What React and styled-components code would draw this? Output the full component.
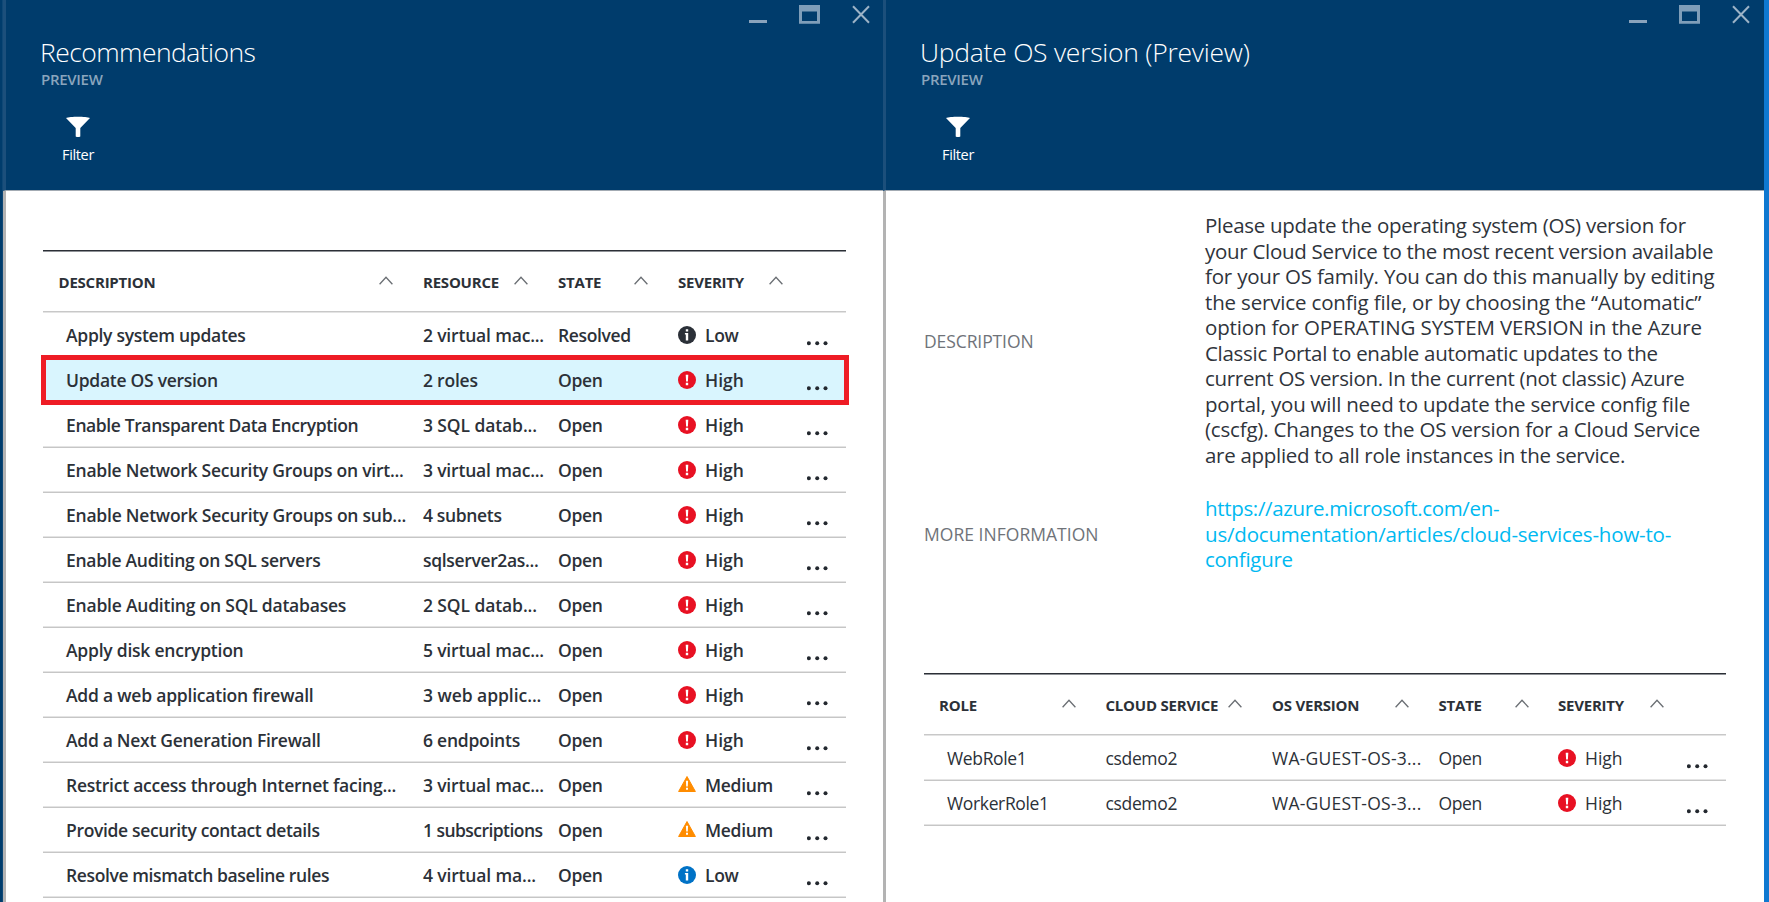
import React from 'react';
import styled, { createGlobalStyle, css } from 'styled-components';

const GlobalStyle = createGlobalStyle`
  * { box-sizing: border-box; }
  body {
    margin: 0;
    background: #fff;
    color: #2c3138;
    font-family: 'Open Sans', 'Noto Sans', sans-serif;
    overflow: hidden;
  }
`;

const Desktop = styled.div`
  display: flex;
  width: 1769px;
  height: 902px;
  overflow: hidden;
`;

const LeftStrip = styled.div`
  flex: 0 0 3px;
  background: linear-gradient(to right, #003c6c 0 2px, #0f4876 2px 3px);
`;

const RightStrip = styled.div`
  flex: 0 0 5px;
  background: #0f78d0;
`;

const Blade = styled.section`
  flex: 0 0 ${(p) => p.$width}px;
  display: flex;
  flex-direction: column;
`;

const BladeHeader = styled.header`
  position: relative;
  flex: 0 0 191px;
  padding: 33px 0 0 34px;
  background: #003c6c;
  color: #fff;
  border-left: 3px solid #1c4f7b;
  border-bottom: 1px solid #a3abb3;
`;

const BladeBody = styled.div`
  flex: 1;
  min-height: 0;
  background: #fff;
  border-left: 3px solid #b3b3b3;
  padding-left: ${(p) => p.$inset}px;
`;

const Controls = styled.div`
  position: absolute;
  top: 5px;
  right: ${(p) => p.$right}px;
  display: flex;
  gap: 32px;
  svg { display: block; }
`;

const Title = styled.h1`
  margin: 0;
  font-size: 26.5px;
  line-height: 38px;
  font-weight: 300;
  white-space: nowrap;
  letter-spacing: ${(p) => p.$tracking}px;
`;

const Subtitle = styled.div`
  margin-top: -2px;
  padding-left: 1px;
  font-size: 15px;
  line-height: 20px;
  font-weight: 600;
  letter-spacing: -0.3px;
  color: #8aa5bd;
`;

const FilterButton = styled.div`
  width: 76px;
  margin-top: 27px;
  display: flex;
  flex-direction: column;
  align-items: center;
  font-size: 14.5px;
  line-height: 20px;
  letter-spacing: -0.35px;
  svg { display: block; margin-bottom: 7px; }
`;

const Table = styled.div`
  position: relative;
  width: ${(p) => p.$width}px;
  margin-top: ${(p) => p.$top}px;
`;

const gridRow = css`
  display: grid;
  grid-template-columns: ${(p) => p.$columns};
`;

const HeadRow = styled.div`
  ${gridRow}
  height: 63px;
  border-top: 1px solid #2b2f36;
  border-bottom: 1px solid #e4e4e4;
  box-shadow: inset 0 1px 0 #8f9297, inset 0 -1px 0 #c8c8c8;
`;

const HeadCell = styled.div`
  display: flex;
  justify-content: space-between;
  padding: 21px ${(p) => p.$right ?? 30}px 0 ${(p) => p.$left ?? 0}px;
  font-size: 15px;
  line-height: 20px;
  font-weight: 700;
  letter-spacing: -0.22px;
  white-space: nowrap;
  svg { display: block; margin-top: 4px; }
`;

const Row = styled.div`
  ${gridRow}
  height: 45px;
  font-size: 17.5px;
  line-height: 24px;
  font-weight: ${(p) => (p.$bold ? 600 : 400)};
  border-bottom: 1px solid #c6c6c6;
  box-shadow: inset 0 -1px 0 #e4e4e4;
  background: ${(p) => (p.$selected ? '#d9f5fe' : 'transparent')};
`;

const Cell = styled.div`
  padding: 10px 0 0 ${(p) => p.$left ?? 0}px;
  letter-spacing: ${(p) => p.$tracking ?? -0.35}px;
  white-space: nowrap;
`;

const SeverityCell = styled(Cell)`
  display: flex;
  gap: 9px;
  svg { flex: none; margin-top: 3px; }
`;

const MoreCell = styled.div`
  padding: 28px 0 0 9px;
  svg { display: block; }
`;

const Callout = styled.div`
  position: absolute;
  left: -2px;
  right: -3px;
  top: 105px;
  height: 50px;
  border: 5px solid #ee1c25;
`;

const Details = styled.dl`
  display: grid;
  grid-template-columns: 281px 1fr;
  align-items: center;
  row-gap: 28px;
  margin: 0;
  padding-top: 22px;
`;

const DetailLabel = styled.dt`
  font-size: 17.5px;
  line-height: 24px;
  letter-spacing: ${(p) => p.$tracking}px;
  color: #6f7379;
`;

const DetailValue = styled.dd`
  margin: 0;
  font-size: 20.5px;
  line-height: 25.5px;
  color: ${(p) => (p.$link ? '#00b9f1' : '#2f343b')};
`;

const Line = styled.span`
  display: table;
  white-space: nowrap;
  letter-spacing: ${(p) => p.$tracking}px;
`;

const Minimize = () => (
  <svg width="18" height="20"><rect y="15" width="18" height="3" fill="#8aa3bc" /></svg>
);
const Maximize = () => (
  <svg width="21" height="20"><path fill="#7f9eb9" fillRule="evenodd" d="M0 0H21V18.7H0ZM3 6.5V16H18V6.5Z" /></svg>
);
const Close = () => (
  <svg width="18" height="20"><path d="M1 1.3L17 17.7M17 1.3L1 17.7" stroke="#9cb3c7" strokeWidth="2" /></svg>
);
const Funnel = () => (
  <svg width="24" height="22"><path fill="#fff" d="M0 2C4 .2 20 .2 24 2L14.3 12V20.5Q12 21.5 9.7 20.5V12Z" /></svg>
);
const Chevron = () => (
  <svg width="14" height="9"><path d="M.6 8.2L7 1.2L13.4 8.2" fill="none" stroke="#6b6f74" strokeWidth="1.3" /></svg>
);
const Dots = () => (
  <svg width="22" height="5" fill="#23282f">
    <circle cx="1.9" cy="2.2" r="2" /><circle cx="10.2" cy="2.2" r="2" /><circle cx="18.5" cy="2.2" r="2" />
  </svg>
);

function SeverityIcon({ kind }) {
  if (kind === 'Medium') {
    return (
      <svg width="18" height="18">
        <path d="M9 .5L17.4 15.5H.6Z" fill="#ff8c00" stroke="#ff8c00" strokeWidth="1" strokeLinejoin="round" />
        <path d="M7.9 4.8H10.1L9.8 10.6H8.2ZM8 11.7H10V13.7H8Z" fill="#fff" />
      </svg>
    );
  }
  if (kind === 'High') {
    return (
      <svg width="18" height="18">
        <circle cx="9" cy="9" r="9" fill="#e81123" />
        <path d="M7.7 3.7H10.3L9.9 10.6H8.1ZM7.8 11.8H10.2V14.2H7.8Z" fill="#fff" />
      </svg>
    );
  }
  return (
    <svg width="18" height="18">
      <circle cx="9" cy="9" r="9" fill={kind === 'Info' ? '#0072c6' : '#2b3038'} />
      <path d="M7.8 3.2H10.2V5.5H7.8ZM6.9 6.9H10.2V14.5H7.8V8.4H6.9Z" fill="#fff" />
    </svg>
  );
}

const leftColumns = '380px 135px 120px 120px 48px';
const rightColumns = '181.5px 166.5px 166.5px 119.5px 120px 1fr';

const severityTracking = { High: 0, Medium: -0.3, Low: -0.35 };

const recommendations = [
  { name: ['Apply system updates', -0.29], resource: ['2 virtual mac...', -0.18], state: 'Resolved', severity: 'Low', icon: 'Resolved' },
  { name: ['Update OS version', -0.28], resource: ['2 roles', -0.22], state: 'Open', severity: 'High' },
  { name: ['Enable Transparent Data Encryption', -0.39], resource: ['3 SQL datab...', -0.1], state: 'Open', severity: 'High' },
  { name: ['Enable Network Security Groups on virt...', -0.24], resource: ['3 virtual mac...', -0.18], state: 'Open', severity: 'High' },
  { name: ['Enable Network Security Groups on sub...', -0.23], resource: ['4 subnets', -0.35], state: 'Open', severity: 'High' },
  { name: ['Enable Auditing on SQL servers', -0.27], resource: ['sqlserver2as...', -0.34], state: 'Open', severity: 'High' },
  { name: ['Enable Auditing on SQL databases', -0.22], resource: ['2 SQL datab...', -0.1], state: 'Open', severity: 'High' },
  { name: ['Apply disk encryption', -0.23], resource: ['5 virtual mac...', -0.18], state: 'Open', severity: 'High' },
  { name: ['Add a web application firewall', -0.22], resource: ['3 web applic...', -0.05], state: 'Open', severity: 'High' },
  { name: ['Add a Next Generation Firewall', -0.29], resource: ['6 endpoints', -0.25], state: 'Open', severity: 'High' },
  { name: ['Restrict access through Internet facing...', -0.24], resource: ['3 virtual mac...', -0.18], state: 'Open', severity: 'Medium' },
  { name: ['Provide security contact details', -0.34], resource: ['1 subscriptions', -0.55], state: 'Open', severity: 'Medium' },
  { name: ['Resolve mismatch baseline rules', -0.38], resource: ['4 virtual ma...', -0.15], state: 'Open', severity: 'Low', icon: 'Info' },
];

const description = [
  ['Please update the operating system (OS) version for', -0.28],
  ['your Cloud Service to the most recent version available', -0.29],
  ['for your OS family. You can do this manually by editing', -0.2],
  ['the service config file, or by choosing the “Automatic”', -0.16],
  ['option for OPERATING SYSTEM VERSION in the Azure', -0.14],
  ['Classic Portal to enable automatic updates to the', -0.3],
  ['current OS version. In the current (not classic) Azure', -0.31],
  ['portal, you will need to update the service config file', -0.22],
  ['(cscfg). Changes to the OS version for a Cloud Service', -0.19],
  ['are applied to all role instances in the service.', -0.29],
];

const link = [
  ['https://azure.microsoft.com/en-', -0.33],
  ['us/documentation/articles/cloud-services-how-to-', -0.19],
  ['configure', -0.3],
];

function Header({ title, tracking, controlsRight }) {
  return (
    <BladeHeader>
      <Controls $right={controlsRight}><Minimize /><Maximize /><Close /></Controls>
      <Title $tracking={tracking}>{title}</Title>
      <Subtitle>PREVIEW</Subtitle>
      <FilterButton><Funnel />Filter</FilterButton>
    </BladeHeader>
  );
}

const Lines = ({ items }) =>
  items.map(([text, tracking]) => <Line key={text} $tracking={tracking}>{text}</Line>);

export default function App() {
  return (
    <>
      <GlobalStyle />
      <Desktop>
        <LeftStrip />
        <Blade $width={880}>
          <Header title="Recommendations" tracking={-0.55} controlsRight={13} />
          <BladeBody $inset={37}>
            <Table $width={803} $top={59}>
              <HeadRow $columns={leftColumns}>
                <HeadCell $left={15.5}>DESCRIPTION<Chevron /></HeadCell>
                <HeadCell>RESOURCE<Chevron /></HeadCell>
                <HeadCell>STATE<Chevron /></HeadCell>
                <HeadCell $right={15}>SEVERITY<Chevron /></HeadCell>
              </HeadRow>
              {recommendations.map(({ name, resource, state, severity, icon }, i) => (
                <Row key={name[0]} $columns={leftColumns} $bold $selected={i === 1}>
                  <Cell $left={23} $tracking={name[1]}>{name[0]}</Cell>
                  <Cell $tracking={resource[1]}>{resource[0]}</Cell>
                  <Cell>{state}</Cell>
                  <SeverityCell $tracking={severityTracking[severity]}>
                    <SeverityIcon kind={icon ?? severity} />{severity}
                  </SeverityCell>
                  <MoreCell><Dots /></MoreCell>
                </Row>
              ))}
              <Callout />
            </Table>
          </BladeBody>
        </Blade>
        <Blade $width={881}>
          <Header title="Update OS version (Preview)" tracking={-0.26} controlsRight={14} />
          <BladeBody $inset={38}>
            <Details>
              <DetailLabel $tracking={-0.1}>DESCRIPTION</DetailLabel>
              <DetailValue><Lines items={description} /></DetailValue>
              <DetailLabel $tracking={0.03}>MORE INFORMATION</DetailLabel>
              <DetailValue $link><Lines items={link} /></DetailValue>
            </Details>
            <Table $width={802} $top={100.5}>
              <HeadRow $columns={rightColumns}>
                <HeadCell $left={15}>ROLE<Chevron /></HeadCell>
                <HeadCell>CLOUD SERVICE<Chevron /></HeadCell>
                <HeadCell>OS VERSION<Chevron /></HeadCell>
                <HeadCell $right={29.5}>STATE<Chevron /></HeadCell>
                <HeadCell $right={14}>SEVERITY<Chevron /></HeadCell>
              </HeadRow>
              {['WebRole1', 'WorkerRole1'].map((role) => (
                <Row key={role} $columns={rightColumns}>
                  <Cell $left={23}>{role}</Cell>
                  <Cell>csdemo2</Cell>
                  <Cell $tracking={0.25}>WA-GUEST-OS-3...</Cell>
                  <Cell>Open</Cell>
                  <SeverityCell $tracking={0}><SeverityIcon kind="High" />High</SeverityCell>
                  <MoreCell><Dots /></MoreCell>
                </Row>
              ))}
            </Table>
          </BladeBody>
        </Blade>
        <RightStrip />
      </Desktop>
    </>
  );
}
